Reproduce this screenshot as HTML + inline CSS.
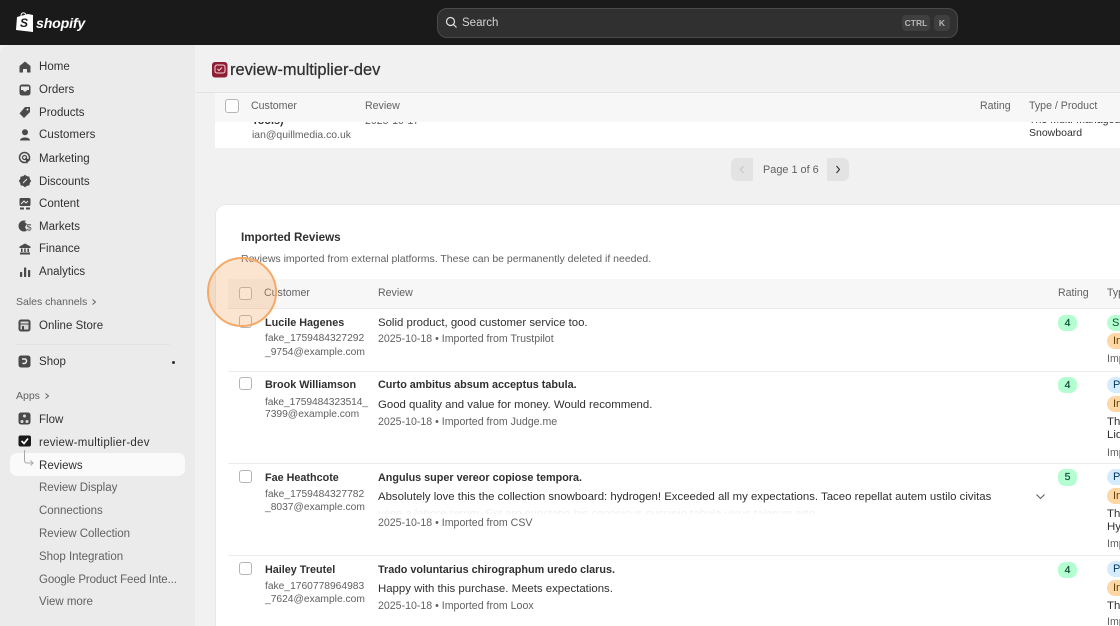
<!DOCTYPE html>
<html><head><meta charset="utf-8"><style>
html,body{margin:0;padding:0;background:#f1f1f1}
#r{position:relative;width:1120px;height:626px;overflow:hidden;background:#f1f1f1;font-family:"Liberation Sans",sans-serif;font-size:11px;color:#303030;filter:blur(.25px)}
#r div,#r svg{position:absolute}
.t{line-height:16px;white-space:nowrap;height:16px;margin-top:1px}
.n{left:39px;color:#303030;font-size:11.5px;letter-spacing:.02px}
.s{left:39px;color:#616161;font-size:11.5px;letter-spacing:-.02px}
.h{color:#616161;font-size:10.6px}
.b{font-weight:bold;color:#303030;font-size:10.8px}
.g{color:#616161;font-size:10.6px}
.e{color:#616161;font-size:10.25px}
.d{color:#303030;font-size:11.4px}
.cb{width:11px;height:11px;border:1px solid #b5b5b5;border-radius:3px;background:#fff}
.bd{height:1px;left:228px;width:892px;background:#ebebeb}
.p{border-radius:8px;left:1107px;width:30px;height:16px;text-align:left;padding-left:6px;box-sizing:border-box;line-height:16px;font-size:11px}
.bl{background:#d5ebff;color:#003a5a}
.or{background:#ffd6a4;color:#5e4200}
.ra{left:1058px;width:19px;height:16px;border-radius:7px;background:#b4fed2;color:#0c5132;font-size:10.5px;-webkit-text-stroke:.2px #0c5132;text-align:center;line-height:16px}
</style></head><body><div id="r">
<div style="left:0;top:0;width:1120px;height:45px;background:#1a1a1a"></div>
<svg style="left:16px;top:12px" width="18" height="21" viewBox="0 0 18 21"><path d="M1 5 L12 2 L17 3 L17 20 L0 18 Z" fill="#fff"/><path d="M5 4 C5 0 9 0 10 3" fill="none" stroke="#fff"/><text x="4" y="15" font-family="Liberation Sans" font-size="12" font-weight="bold" font-style="italic" fill="#1a1a1a">S</text></svg>
<div class="t" style="left:36px;top:15px;color:#fff;font-size:14.2px;font-weight:bold;font-style:italic;letter-spacing:-.2px">shopify</div>
<div style="left:437px;top:8px;width:519px;height:28px;border:1px solid #4a4a4a;border-radius:10px;background:#303030"></div>
<svg style="left:445px;top:16px" width="13" height="13" viewBox="0 0 13 13"><circle cx="5.5" cy="5.5" r="4" fill="none" stroke="#e3e3e3" stroke-width="1.2"/><path d="M8.5 8.5 L11.5 11.5" stroke="#e3e3e3" stroke-width="1.2"/></svg>
<div class="t" style="left:462px;top:14px;color:#d4d4d4;font-size:11.5px">Search</div>
<div style="left:902px;top:15px;width:28px;height:16px;border-radius:4px;background:#3f3f3f;color:#b5b5b5;font-size:8.5px;font-weight:bold;text-align:center;line-height:16px">CTRL</div>
<div style="left:934px;top:15px;width:16px;height:16px;border-radius:4px;background:#3f3f3f;color:#b5b5b5;font-size:8.5px;font-weight:bold;text-align:center;line-height:16px">K</div>

<!-- sidebar -->
<div style="left:0;top:45px;width:195px;height:581px;background:#ebebeb;border-top-left-radius:10px"></div>
<svg style="left:18px;top:60px" width="14" height="14" viewBox="0 0 14 14"><path d="M7 1.5 L12.5 6 V12.5 H9 V9 H5 V12.5 H1.5 V6 Z" fill="#4a4a4a"/></svg>
<div class="t n" style="top:58px">Home</div>
<svg style="left:18px;top:83px" width="14" height="14" viewBox="0 0 14 14"><rect x="1.5" y="1.5" width="11" height="11" rx="2.5" fill="#4a4a4a"/><path d="M3 3.5 H11 V7 H9 L8 8.5 H6 L5 7 H3 Z" fill="#ebebeb"/></svg>
<div class="t n" style="top:81px">Orders</div>
<svg style="left:18px;top:105px" width="14" height="14" viewBox="0 0 14 14"><path d="M7 2 H12 V7 L6 13 L1.5 8.5 Z" fill="#4a4a4a"/><circle cx="9.5" cy="4.5" r="1" fill="#ebebeb"/></svg>
<div class="t n" style="top:104px">Products</div>
<svg style="left:18px;top:128px" width="14" height="14" viewBox="0 0 14 14"><circle cx="7" cy="4.2" r="3" fill="#4a4a4a"/><path d="M2 12.5 C2 8.5 12 8.5 12 12.5 Z" fill="#4a4a4a"/></svg>
<div class="t n" style="top:126px;letter-spacing:.1px">Customers</div>
<svg style="left:18px;top:151px" width="14" height="14" viewBox="0 0 14 14"><circle cx="6.5" cy="6.5" r="5" fill="none" stroke="#4a4a4a" stroke-width="1.5"/><circle cx="6.5" cy="6.5" r="2" fill="none" stroke="#4a4a4a" stroke-width="1.3"/><path d="M7 7 L13 9 L10 10 L9 13 Z" fill="#4a4a4a"/></svg>
<div class="t n" style="top:150px">Marketing</div>
<svg style="left:18px;top:174px" width="14" height="14" viewBox="0 0 14 14"><path d="M7 .8 L9 2.2 L11.4 2.6 L11.8 5 L13.2 7 L11.8 9 L11.4 11.4 L9 11.8 L7 13.2 L5 11.8 L2.6 11.4 L2.2 9 L.8 7 L2.2 5 L2.6 2.6 L5 2.2 Z" fill="#4a4a4a"/><path d="M5 9 L9 5" stroke="#ebebeb"/></svg>
<div class="t n" style="top:173px">Discounts</div>
<svg style="left:18px;top:197px" width="14" height="14" viewBox="0 0 14 14"><rect x="1.5" y="1" width="11" height="8" rx="1.5" fill="#4a4a4a"/><path d="M3 7 L6 4 L8 6 L10 4" stroke="#ebebeb" fill="none"/><rect x="2" y="10.5" width="4" height="2" fill="#4a4a4a"/><rect x="8" y="10.5" width="4" height="2" fill="#4a4a4a"/></svg>
<div class="t n" style="top:195px">Content</div>
<svg style="left:18px;top:219px" width="14" height="14" viewBox="0 0 14 14"><circle cx="6" cy="7" r="5.5" fill="#4a4a4a"/><path d="M6.5 3 L9 5 L7 8 L9 12 H14 V2 H8 Z" fill="#ebebeb"/><text x="8.5" y="11.5" font-family="Liberation Sans" font-size="9" fill="#4a4a4a">$</text></svg>
<div class="t n" style="top:218px">Markets</div>
<svg style="left:18px;top:242px" width="14" height="14" viewBox="0 0 14 14"><path d="M7 1.5 L12.5 4.5 V6 H1.5 V4.5 Z M2 10.5 H12 V12.5 H2 Z" fill="#4a4a4a"/><rect x="3" y="6.5" width="1.6" height="3.5" fill="#4a4a4a"/><rect x="6.2" y="6.5" width="1.6" height="3.5" fill="#4a4a4a"/><rect x="9.4" y="6.5" width="1.6" height="3.5" fill="#4a4a4a"/></svg>
<div class="t n" style="top:240px">Finance</div>
<svg style="left:18px;top:265px" width="14" height="14" viewBox="0 0 14 14"><rect x="2" y="7" width="2.2" height="5" rx=".6" fill="#4a4a4a"/><rect x="6" y="2.5" width="2.2" height="9.5" rx=".6" fill="#4a4a4a"/><rect x="10" y="5" width="2.2" height="7" rx=".6" fill="#4a4a4a"/></svg>
<div class="t n" style="top:263px">Analytics</div>
<div class="t" style="left:16px;top:293px;color:#616161;font-size:10.5px">Sales channels</div>
<svg style="left:90px;top:298px" width="8" height="8" viewBox="0 0 8 8"><path d="M2.5 1.5 L5.5 4 L2.5 6.5" fill="none" stroke="#616161"/></svg>
<svg style="left:18px;top:319px" width="13" height="13" viewBox="0 0 13 13"><rect x=".5" y=".5" width="12" height="12" rx="2.5" fill="#4a4a4a"/><rect x="2.5" y="2.5" width="8" height="8" fill="#d8d8d8"/><rect x="4" y="7" width="2" height="3.5" fill="#4a4a4a"/><rect x="2.5" y="4.5" width="8" height="1" fill="#4a4a4a"/></svg>
<div class="t n" style="top:317px">Online Store</div>
<div style="left:15px;top:344px;width:155px;height:1px;background:#e3e3e3"></div>
<svg style="left:18px;top:355px" width="13" height="13" viewBox="0 0 13 13"><rect x=".5" y=".5" width="12" height="12" rx="2.5" fill="#4a4a4a"/><path d="M4 4 H7.5 A2.5 2.5 0 1 1 4.5 8" fill="none" stroke="#ebebeb" stroke-width="1.5"/></svg>
<div class="t n" style="top:353px">Shop</div>
<div style="left:172px;top:361px;width:3px;height:3px;border-radius:2px;background:#303030"></div>
<div class="t" style="left:16px;top:387px;color:#616161;font-size:10.5px">Apps</div>
<svg style="left:43px;top:392px" width="8" height="8" viewBox="0 0 8 8"><path d="M2.5 1.5 L5.5 4 L2.5 6.5" fill="none" stroke="#616161"/></svg>
<svg style="left:18px;top:412px" width="13" height="13" viewBox="0 0 13 13"><rect x=".5" y=".5" width="12" height="12" rx="2.5" fill="#4a4a4a"/><circle cx="6.5" cy="4" r="1.5" fill="#ddd"/><circle cx="4" cy="9.5" r="1.5" fill="#ddd"/><circle cx="9" cy="9.5" r="1.5" fill="#ddd"/></svg>
<div class="t n" style="top:411px">Flow</div>
<svg style="left:18px;top:435px" width="14" height="14" viewBox="0 0 14 14"><rect x=".5" y=".5" width="12.5" height="11" rx="2" fill="#1a1a1a"/><path d="M3.5 6 L6 8.5 L10 3.5" fill="none" stroke="#fff" stroke-width="1.7"/></svg>
<div class="t n" style="top:434px;letter-spacing:.25px">review-multiplier-dev</div>
<div style="left:10px;top:453px;width:175px;height:23px;border-radius:7px;background:#fafafa"></div>
<svg style="left:20px;top:449px" width="16" height="20" viewBox="0 0 16 20"><path d="M4.5 1 V11 Q4.5 14 7 14 H13 M10.5 11.5 L13 14 L10.5 16.5" fill="none" stroke="#a8a8a8"/></svg>
<div class="t n" style="top:457px">Reviews</div>
<div class="t s" style="top:479px">Review Display</div>
<div class="t s" style="top:502px">Connections</div>
<div class="t s" style="top:525px">Review Collection</div>
<div class="t s" style="top:548px">Shop Integration</div>
<div class="t s" style="top:571px;letter-spacing:-.13px">Google Product Feed Inte...</div>
<div class="t s" style="top:593px">View more</div>

<!-- page header -->
<div style="left:196px;top:92px;width:924px;height:1px;background:#e3e3e3"></div>
<svg style="left:212px;top:62px" width="16" height="16" viewBox="0 0 16 16"><rect width="15.5" height="15.5" rx="3" fill="#8e1f35"/><rect x="3" y="3" width="10" height="8" rx="2" fill="none" stroke="#f3d4d8"/><path d="M5.5 7 L7 8.5 L10 5.5" fill="none" stroke="#f3d4d8"/></svg>
<div class="t" style="left:230px;top:61px;font-size:16.4px;color:#303030;-webkit-text-stroke:.25px #303030">review-multiplier-dev</div>

<!-- sticky top table -->
<div style="left:215px;top:122px;width:905px;height:26px;background:#fff"></div>
<div class="t" style="left:252px;top:112px;font-size:10.8px;font-weight:bold">Tools)</div>
<div class="t g" style="left:365px;top:112px">2025-10-17</div>
<div class="t d" style="left:1029px;top:111px;font-size:10.6px">The Multi-managed</div>
<div class="t g" style="left:252px;top:127px;font-size:10.4px">ian@quillmedia.co.uk</div>
<div class="t d" style="left:1029px;top:124px;font-size:10.5px">Snowboard</div>
<div style="left:215px;top:93px;width:905px;height:29px;background:#f7f7f7"></div>
<div class="cb" style="left:225px;top:99px;width:12px;height:12px"></div>
<div class="t h" style="left:251px;top:97px">Customer</div>
<div class="t h" style="left:365px;top:97px">Review</div>
<div class="t h" style="left:980px;top:97px">Rating</div>
<div class="t h" style="left:1029px;top:97px">Type / Product</div>

<!-- pagination -->
<div style="left:731px;top:158px;width:22px;height:23px;background:#e3e3e3;border-radius:6px 0 0 6px"></div>
<svg style="left:738px;top:165px" width="8" height="9" viewBox="0 0 8 9"><path d="M5.5 1 L2.5 4.5 L5.5 8" fill="none" stroke="#c8c8c8" stroke-width="1.2"/></svg>
<div class="t" style="left:763px;top:161px;color:#616161;font-size:10.9px">Page 1 of 6</div>
<div style="left:827px;top:158px;width:22px;height:23px;background:#e3e3e3;border-radius:0 6px 6px 0"></div>
<svg style="left:834px;top:165px" width="8" height="9" viewBox="0 0 8 9"><path d="M2.5 1 L5.5 4.5 L2.5 8" fill="none" stroke="#303030" stroke-width="1.1"/></svg>

<!-- card -->
<div style="left:216px;top:205px;width:915px;height:440px;background:#fff;border-radius:10px;box-shadow:0 0 0 1px #e8e8e8"></div>
<div class="t" style="left:241px;top:229px;font-size:11.65px;font-weight:bold;color:#303030">Imported Reviews</div>
<div class="t g" style="left:241px;top:250px;font-size:10.5px">Reviews imported from external platforms. These can be permanently deleted if needed.</div>
<div style="left:228px;top:279px;width:892px;height:29px;background:#f7f7f7;border-bottom:1px solid #ebebeb"></div>
<div class="t h" style="left:264px;top:284px">Customer</div>
<div class="t h" style="left:378px;top:284px">Review</div>
<div class="t h" style="left:1058px;top:284px">Rating</div>
<div class="t h" style="left:1107px;top:284px">Type</div>
<div class="cb" style="left:239px;top:287px"></div>
<div class="cb" style="left:239px;top:315px"></div>

<!-- row 1 -->
<div class="t b" style="left:265px;top:314px">Lucile Hagenes</div>
<div class="t e" style="left:265px;top:330px">fake_1759484327292</div>
<div class="t e" style="left:265px;top:344px">_9754@example.com</div>
<div class="t d" style="left:378px;top:314px">Solid product, good customer service too.</div>
<div class="t g" style="left:378px;top:330px">2025-10-18 • Imported from Trustpilot</div>
<div class="ra" style="top:315px">4</div>
<div class="p" style="top:315px;background:#b4fed2;color:#0c5132;padding-left:5px">S</div>
<div class="p or" style="top:333px">In</div>
<div class="t g" style="left:1107px;top:350px">Imp</div>
<div class="bd" style="top:371px"></div>

<!-- row 2 -->
<div class="cb" style="left:239px;top:377px"></div>
<div class="t b" style="left:265px;top:376px">Brook Williamson</div>
<div class="t e" style="left:265px;top:394px;letter-spacing:-.1px">fake_1759484323514_</div>
<div class="t e" style="left:265px;top:406px">7399@example.com</div>
<div class="t b" style="left:378px;top:376px">Curto ambitus absum acceptus tabula.</div>
<div class="t d" style="left:378px;top:396px">Good quality and value for money. Would recommend.</div>
<div class="t g" style="left:378px;top:413px">2025-10-18 • Imported from Judge.me</div>
<div class="ra" style="top:377px">4</div>
<div class="p bl" style="top:377px">P</div>
<div class="p or" style="top:396px">In</div>
<div class="t d" style="left:1107px;top:413px">The</div>
<div class="t d" style="left:1107px;top:426px">Liq</div>
<div class="t g" style="left:1107px;top:444px">Imp</div>
<div class="bd" style="top:463px"></div>

<!-- row 3 -->
<div class="cb" style="left:239px;top:470px"></div>
<div class="t b" style="left:265px;top:469px">Fae Heathcote</div>
<div class="t e" style="left:265px;top:486px">fake_1759484327782</div>
<div class="t e" style="left:265px;top:499px">_8037@example.com</div>
<div class="t b" style="left:378px;top:469px">Angulus super vereor copiose tempora.</div>
<div class="t d" style="left:378px;top:488px">Absolutely love this the collection snowboard: hydrogen! Exceeded all my expectations. Taceo repellat autem ustilo civitas</div>
<div class="t d" style="left:378px;top:505px;color:#f1f1f1;height:8px;overflow:hidden">voco a labore rerum. Est aro cunctatio bis canonicus suscipio tabula ulcus talarum arto</div>
<div class="t g" style="left:378px;top:514px">2025-10-18 • Imported from CSV</div>
<svg style="left:1035px;top:493px" width="11" height="8" viewBox="0 0 11 8"><path d="M1.5 1.5 L5.5 5.5 L9.5 1.5" fill="none" stroke="#616161" stroke-width="1.1"/></svg>
<div class="ra" style="top:469px;height:17px;line-height:17px">5</div>
<div class="p bl" style="top:469px">P</div>
<div class="p or" style="top:488px">In</div>
<div class="t d" style="left:1107px;top:505px">The</div>
<div class="t d" style="left:1107px;top:518px">Hy</div>
<div class="t g" style="left:1107px;top:535px">Imp</div>
<div class="bd" style="top:555px"></div>

<!-- row 4 -->
<div class="cb" style="left:239px;top:562px"></div>
<div class="t b" style="left:265px;top:561px">Hailey Treutel</div>
<div class="t e" style="left:265px;top:578px">fake_1760778964983</div>
<div class="t e" style="left:265px;top:591px">_7624@example.com</div>
<div class="t b" style="left:378px;top:561px">Trado voluntarius chirographum uredo clarus.</div>
<div class="t d" style="left:378px;top:580px">Happy with this purchase. Meets expectations.</div>
<div class="t g" style="left:378px;top:597px">2025-10-18 • Imported from Loox</div>
<div class="ra" style="top:562px">4</div>
<div class="p bl" style="top:561px">P</div>
<div class="p or" style="top:580px">In</div>
<div class="t d" style="left:1107px;top:597px">The</div>
<div class="t g" style="left:1107px;top:613px">Imp</div>

<!-- highlight -->
<div style="left:207px;top:257px;width:70px;height:70px;box-sizing:border-box;border-radius:50%;background:rgba(242,160,90,.28);border:2px solid #f4a967"></div>
</div></body></html>
